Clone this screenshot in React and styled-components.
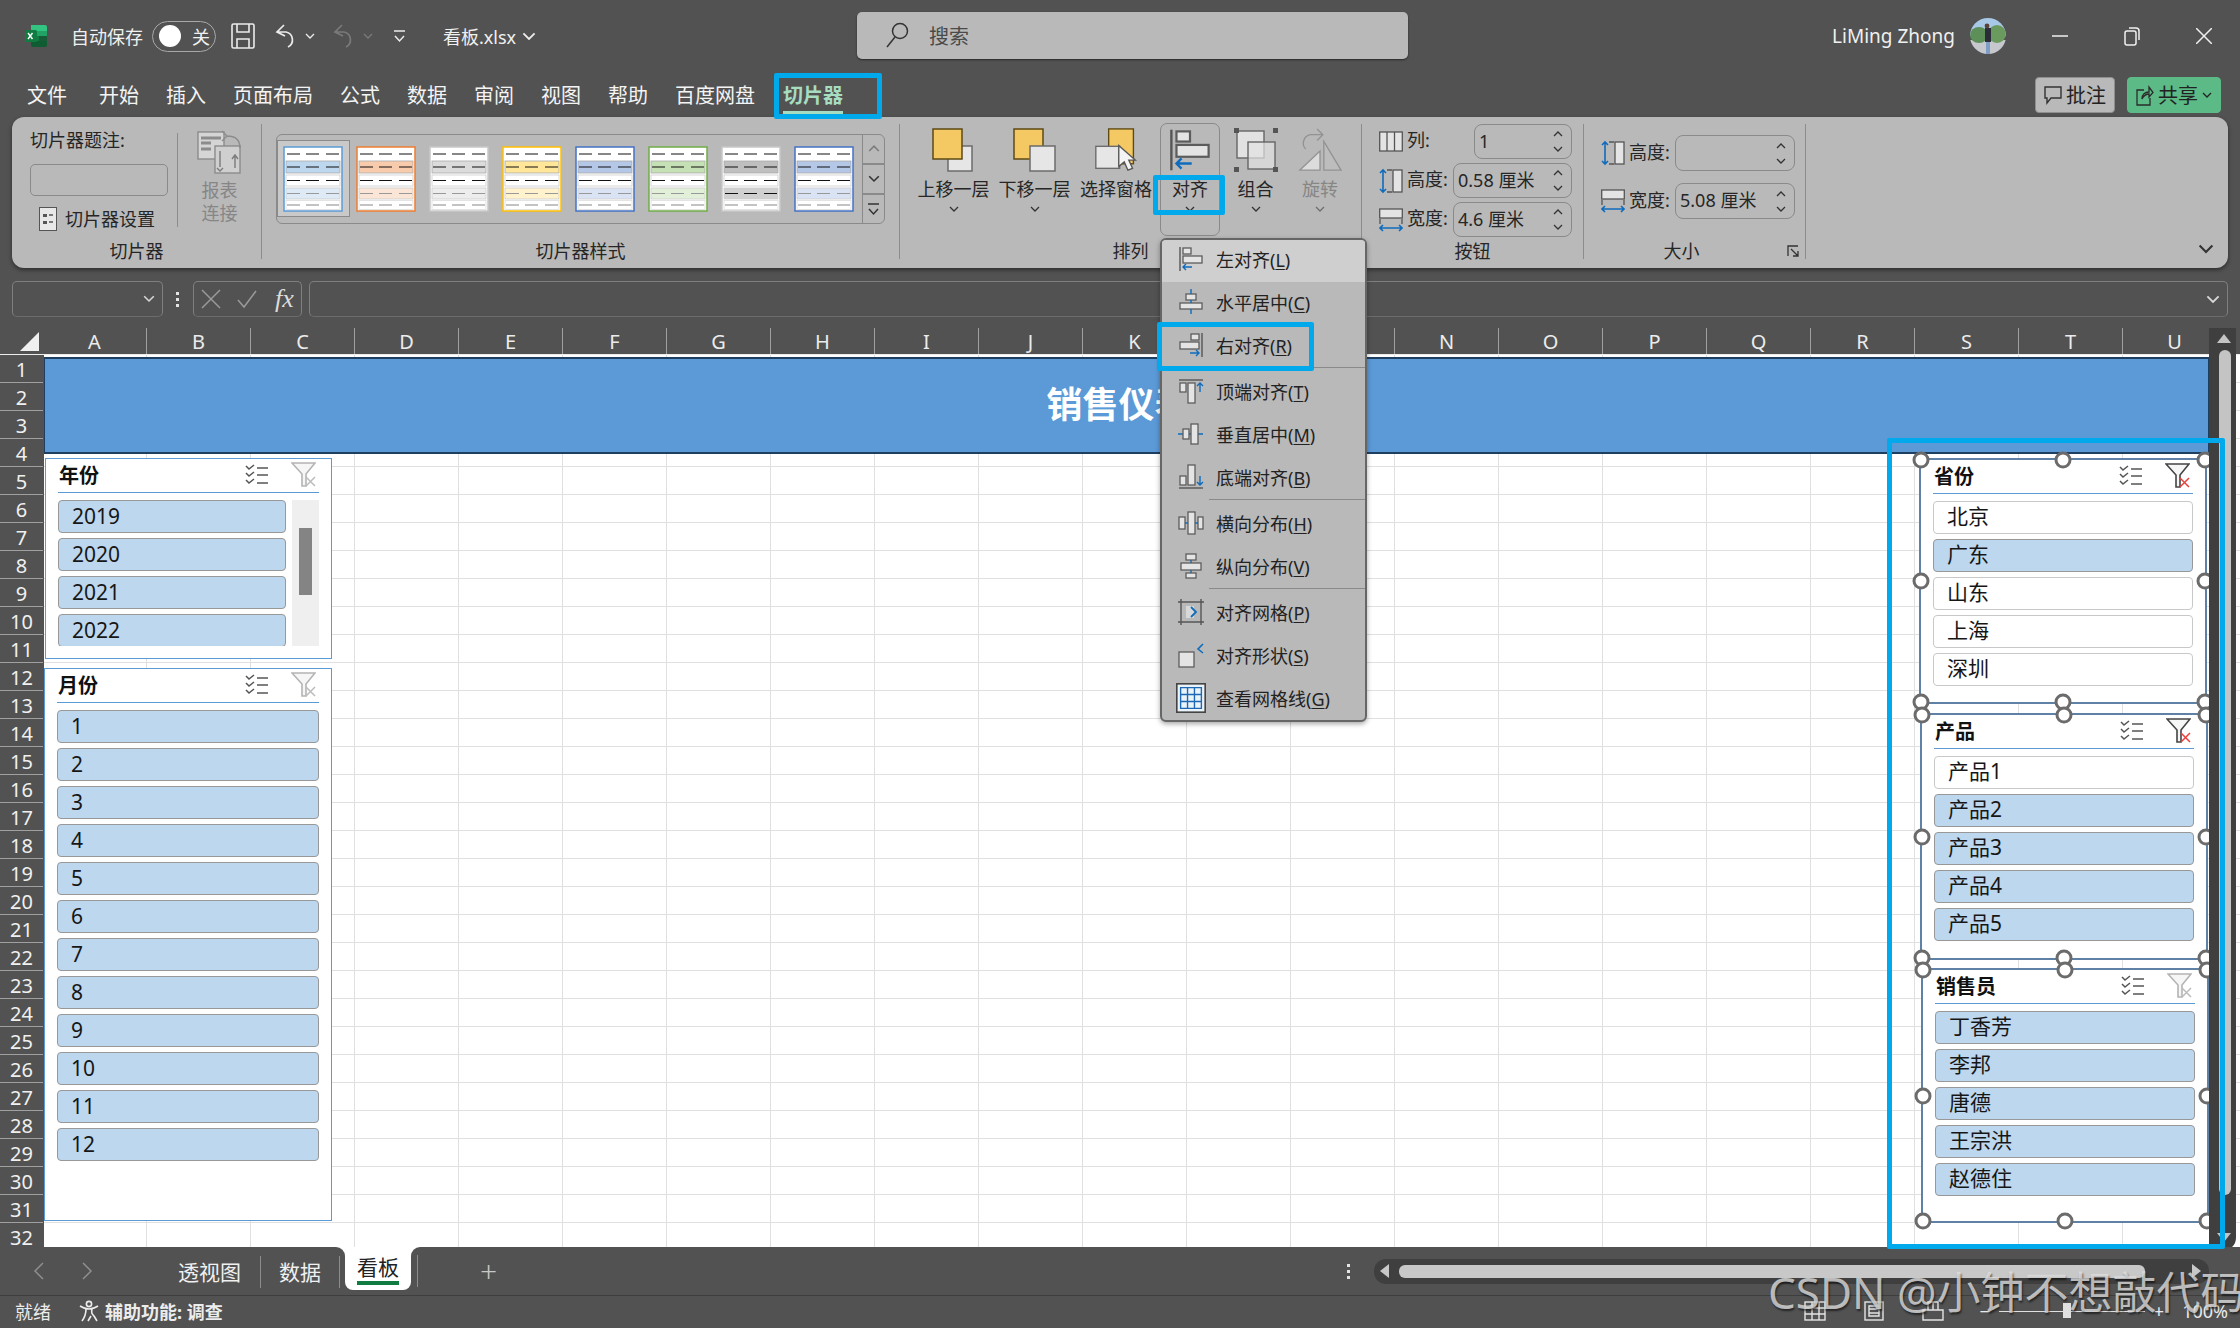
import React from 'react';
import styled, { createGlobalStyle } from 'styled-components';

const UI_FONT = '"Noto Sans", "Noto Sans CJK SC", sans-serif';
const DARK = '#525252';
const RIBBON = '#b9b9b9';
const CYAN = '#00a9ec';
const BLUE = '#0f6cbd';

const GlobalStyle = createGlobalStyle`
  html, body { margin: 0; padding: 0; background: ${DARK}; }
  * { box-sizing: border-box; }
`;

const Page = styled.div`
  position: relative;
  width: 2240px;
  height: 1328px;
  overflow: hidden;
  display: flex;
  flex-direction: column;
  background: ${DARK};
  color: #f0f0f0;
  font-family: ${UI_FONT};
`;

/* title bar */
const TitleBar = styled.div`
  height: 72px;
  flex: none;
  display: flex;
  align-items: center;
`;
const TitleLeft = styled.div`
  flex: 0 0 857px;
  display: flex;
  align-items: center;
  padding-left: 24px;
  font-size: 18px;
`;
const Spaced = styled.div`
  display: flex;
  align-items: center;
  margin-left: ${p => p.$ml || 0}px;
  white-space: nowrap;
`;
const Toggle = styled.div`
  width: 64px;
  height: 31px;
  margin-left: 9px;
  border: 1px solid #a8a8a8;
  border-radius: 16px;
  display: flex;
  align-items: center;
  padding-left: 6px;
  &::before {
    content: '';
    width: 22px;
    height: 22px;
    border-radius: 50%;
    background: #fff;
    margin-right: 11px;
  }
`;
const SearchBox = styled.div`
  flex: 0 0 551px;
  height: 47px;
  margin-top: -2px;
  background: ${RIBBON};
  border-radius: 5px;
  box-shadow: 0 1px 2px rgba(0, 0, 0, 0.5);
  color: #4a4a4a;
  font-size: 20px;
  display: flex;
  align-items: center;
  gap: 20px;
  padding-left: 28px;
`;
const TitleRight = styled.div`
  flex: 1;
  display: flex;
  align-items: center;
  justify-content: flex-end;
  padding-right: 28px;
  font-size: 19px;
`;

/* ribbon tabs */
const TabRow = styled.div`
  height: 45px;
  flex: none;
  display: flex;
  align-items: center;
  padding: 0 19px 0 27px;
  font-size: 20px;
`;
const RibbonTab = styled.div`
  position: relative;
  margin-right: ${p => p.$mr || 27}px;
  white-space: nowrap;
  color: ${p => (p.$active ? '#a6dcc0' : '#f4f4f4')};
  font-weight: ${p => (p.$active ? 700 : 400)};
  &::after {
    content: '';
    display: ${p => (p.$active ? 'block' : 'none')};
    position: absolute;
    left: 0;
    right: 0;
    bottom: -5px;
    height: 3px;
    background: #a6dcc0;
  }
`;
const TabActions = styled.div`
  margin-left: auto;
  display: flex;
  gap: 12px;
`;
const CommentButton = styled.div`
  width: 80px;
  height: 36px;
  background: ${RIBBON};
  border: 1px solid #8f8f8f;
  border-radius: 4px;
  color: #222;
  font-size: 20px;
  display: flex;
  align-items: center;
  justify-content: center;
  gap: 4px;
`;
const ShareButton = styled(CommentButton)`
  width: 94px;
  background: #5bba85;
  border-color: #5bba85;
`;

/* ribbon */
const Ribbon = styled.div`
  flex: none;
  margin: 0 12px;
  width: 2216px;
  height: 151px;
  background: ${RIBBON};
  border-radius: 12px;
  box-shadow: 0 2px 4px rgba(0, 0, 0, 0.45);
  display: flex;
  color: #262626;
  font-size: 18px;
  line-height: 24px;
`;
const Group = styled.div`
  flex: 0 0 ${p => p.$w}px;
  height: 135px;
  margin-top: 7px;
  border-right: 1px solid #8c8c8c;
  display: flex;
  flex-direction: column;
`;
const GroupBody = styled.div`
  flex: 0 0 115px;
  min-height: 0;
  display: flex;
`;
const GroupLabel = styled.div`
  position: relative;
  flex: 0 0 24px;
  line-height: 24px;
  text-align: center;
  padding-right: ${p => p.$pr || 0}px;
  white-space: nowrap;
`;
const CaptionColumn = styled.div`
  flex: 0 0 166px;
  padding-left: 18px;
  border-right: 1px solid #8c8c8c;
  margin: 9px 0 12px;
  display: flex;
  flex-direction: column;
`;
const CaptionTitle = styled.div`
  height: 14px;
  line-height: 14px;
  white-space: nowrap;
`;
const CaptionInput = styled.div`
  flex: none;
  width: 138px;
  height: 32px;
  margin-top: 17px;
  border: 1px solid #8a8a8a;
  border-radius: 5px;
`;
const SettingsRow = styled.div`
  display: flex;
  align-items: center;
  gap: 8px;
  margin: 11px 0 0 9px;
  white-space: nowrap;
`;
const ReportButton = styled.div`
  flex: 1;
  display: flex;
  flex-direction: column;
  align-items: center;
  padding-top: 4px;
  color: #868686;
  line-height: 23px;
  text-align: center;
  & > svg {
    margin-bottom: 5px;
  }
`;
const Gallery = styled.div`
  width: 609px;
  height: 90px;
  margin: 10px 0 0 14px;
  border: 1px solid #8a8a8a;
  border-radius: 6px;
  display: flex;
  align-items: flex-start;
`;
const SwatchCell = styled.div`
  flex: 0 0 73px;
  height: 77px;
  margin-top: 5px;
  padding: 5px;
  border: 1px solid ${p => (p.$selected ? '#8a8a8a' : 'transparent')};
  background: ${p => (p.$selected ? '#c9c9c9' : 'transparent')};
`;
const GalleryScroll = styled.div`
  margin-left: auto;
  flex: 0 0 22px;
  height: 88px;
  border-left: 1px solid #8a8a8a;
  display: flex;
  flex-direction: column;
`;
const ScrollStep = styled.div`
  flex: 1;
  display: flex;
  align-items: center;
  justify-content: center;
  border-top: ${p => (p.$line ? '2px solid #8a8a8a' : 'none')};
  opacity: ${p => (p.$off ? 0.45 : 1)};
`;
const ArrangeRow = styled.div`
  display: flex;
  padding-left: 13px;
`;
const BigButton = styled.div`
  position: relative;
  flex: 0 0 ${p => p.$w}px;
  height: 113px;
  margin-top: -1px;
  display: flex;
  flex-direction: column;
  align-items: center;
  padding-top: 5px;
  white-space: nowrap;
  color: ${p => (p.$off ? '#868686' : '#262626')};
  &::before {
    content: '';
    display: ${p => (p.$open ? 'block' : 'none')};
    position: absolute;
    left: 3px;
    right: 3px;
    top: 0;
    bottom: 0;
    border: 1px solid #8a8a8a;
    border-radius: 7px;
  }
`;
const BigLabel = styled.div`
  height: 24px;
  margin-top: 5px;
  line-height: 24px;
`;
const BigCaret = styled.div`
  margin-top: 5px;
  display: flex;
  opacity: ${p => (p.$off ? 0.55 : 1)};
`;
const FieldStack = styled.div`
  width: 100%;
  display: flex;
  flex-direction: column;
  gap: ${p => p.$gap}px;
  padding: ${p => p.$pad};
`;
const FieldRow = styled.div`
  display: flex;
  align-items: center;
  gap: 4px;
`;
const FieldText = styled.span`
  margin-top: -3px;
`;
const SpinInput = styled.div`
  margin-left: auto;
  width: ${p => p.$w}px;
  height: ${p => p.$h || 36}px;
  border: 1px solid #8a8a8a;
  border-radius: 8px;
  display: flex;
  align-items: center;
  justify-content: space-between;
  padding: 0 8px 2px 4px;
  white-space: nowrap;
`;
const SpinArrows = styled.div`
  display: flex;
  flex-direction: column;
  gap: 9px;
  padding-top: 2px;
`;
const Launcher = styled.svg`
  position: absolute;
  right: 6px;
  top: 6px;
`;
const CollapseCaret = styled.div`
  margin: auto 14px 14px auto;
  display: flex;
`;

/* formula bar */
const FormulaBar = styled.div`
  flex: none;
  height: 36px;
  margin: 13px 12px 11px;
  display: flex;
  align-items: stretch;
`;
const FormulaBox = styled.div`
  flex: ${p => (p.$w ? `0 0 ${p.$w}px` : 1)};
  margin-left: ${p => p.$ml || 0}px;
  border: 1px solid #7f7f7f;
  border-bottom-color: #6c6c6c;
  border-radius: 5px;
  display: flex;
  align-items: center;
  justify-content: ${p => p.$justify || 'flex-end'};
  padding: 0 7px;
  color: #b5b5b5;
`;
const FxText = styled.span`
  font-family: "Liberation Serif", serif;
  font-style: italic;
  font-size: 26px;
  color: #dcdcdc;
  margin-left: 12px;
`;
const VDots = styled.div`
  display: flex;
  flex-direction: column;
  gap: 3px;
  justify-content: center;
  margin-left: ${p => p.$ml}px;
  & > i {
    width: 3px;
    height: 3px;
    background: #e4e4e4;
    display: block;
  }
`;

/* grid */
const GridArea = styled.div`
  position: relative;
  flex: none;
  height: 919px;
  display: flex;
  flex-direction: column;
`;
const ColumnHeaders = styled.div`
  flex: 0 0 26px;
  display: flex;
  overflow: hidden;
`;
const Corner = styled.div`
  flex: 0 0 43px;
  position: relative;
  &::after {
    content: '';
    position: absolute;
    right: 4px;
    bottom: 3px;
    border-style: solid;
    border-width: 0 0 19px 19px;
    border-color: transparent transparent #f0f0f0 transparent;
  }
`;
const ColumnCell = styled.div`
  flex: 0 0 104px;
  font-size: 20px;
  line-height: 28px;
  text-align: center;
  border-right: 1px solid #a0a0a0;
  color: #ececec;
`;
const GridBody = styled.div`
  flex: 1;
  display: flex;
  border-top: 1px solid #ececec;
  overflow: hidden;
`;
const RowHeaders = styled.div`
  flex: 0 0 43px;
  display: flex;
  flex-direction: column;
`;
const RowCell = styled.div`
  flex: 0 0 28px;
  min-height: 0;
  overflow: hidden;
  padding-top: 1px;
  font-size: 20px;
  line-height: 27px;
  text-align: center;
  border-bottom: 1px solid #a0a0a0;
  color: #f0f0f0;
`;
const Sheet = styled.div`
  position: relative;
  flex: 1;
  margin-left: 1px;
  background-color: #fff;
  background-image:
    linear-gradient(#e0e0e0 1px, transparent 1px),
    linear-gradient(90deg, #e0e0e0 1px, transparent 1px);
  background-size: 104px 28px;
  background-position: 102px 27px;
`;
const Banner = styled.div`
  position: absolute;
  left: 0;
  top: 2px;
  width: 2166px;
  height: 97px;
  background: #5b9ad6;
  border: 2px solid #1f3f60;
  border-left-width: 1px;
  display: flex;
  align-items: center;
  justify-content: center;
  padding: 0 0 6px 20px;
  color: #fff;
  font-size: 36px;
  font-weight: 700;
`;

const SlicerBox = styled.div`
  position: absolute;
  left: ${p => p.$x - 44}px;
  top: ${p => p.$y - 355}px;
  width: ${p => p.$w}px;
  height: ${p => p.$h}px;
  background: #fff;
  border: ${p => (p.$selected ? '2px solid #5f81a6' : '1.5px solid #5b9bd5')};
  padding: 0 12px;
  color: #111;
`;
const SlicerHead = styled.div`
  height: 34px;
  display: flex;
  align-items: center;
  border-bottom: 1.5px solid #5b9bd5;
  font-size: 20px;
  font-weight: 700;
  padding: 0 0 2px 1px;
`;
const HeadIcons = styled.div`
  margin-left: auto;
  display: flex;
  align-items: center;
  gap: 22px;
  padding-right: 3px;
`;
const SlicerBody = styled.div`
  display: flex;
  margin-top: 7px;
  justify-content: space-between;
`;
const ItemList = styled.div`
  flex: ${p => (p.$w ? `0 0 ${p.$w}px` : 1)};
  height: ${p => (p.$h ? `${p.$h}px` : 'auto')};
  overflow: hidden;
  display: flex;
  flex-direction: column;
  gap: 5px;
`;
const SlicerItem = styled.div`
  flex: 0 0 33px;
  background: ${p => (p.$on ? '#bdd7ee' : '#fff')};
  border: 1px solid ${p => (p.$on ? '#989898' : '#c8c8c8')};
  border-radius: 4px;
  font-size: 21px;
  line-height: ${p => (p.$digits ? 31 : 29)}px;
  padding-left: 13px;
  color: #161616;
`;
const SlicerScroll = styled.div`
  flex: 0 0 27px;
  height: 146px;
  background: #efefef;
  padding: 28px 7px 0;
  &::before {
    content: '';
    display: block;
    height: 67px;
    background: #848484;
  }
`;
const Handle = styled.span`
  position: absolute;
  left: ${p => p.$x}%;
  top: ${p => p.$y}%;
  width: 17px;
  height: 17px;
  transform: translate(-50%, -50%);
  background: #fff;
  border: 3px solid #6b6b6b;
  border-radius: 50%;
`;

const VScroll = styled.div`
  position: absolute;
  left: 2209px;
  top: 0;
  width: 27px;
  height: 922px;
  background: #3f3f3f;
  border-radius: 0 0 12px 0;
  &::before {
    content: '';
    position: absolute;
    left: 8px;
    top: 6px;
    border-style: solid;
    border-width: 0 7px 9px;
    border-color: transparent transparent #c4c4c4;
  }
  &::after {
    content: '';
    position: absolute;
    left: 8px;
    bottom: 8px;
    border-style: solid;
    border-width: 9px 7px 0;
    border-color: #c4c4c4 transparent transparent;
  }
`;
const VThumb = styled.div`
  position: absolute;
  left: 10px;
  right: 5px;
  top: 22px;
  bottom: 55px;
  border-radius: 6px;
  background: #c4c4c4;
`;

/* sheet tabs */
const TabsBar = styled.div`
  flex: none;
  height: 48px;
  display: flex;
  background: linear-gradient(#fff 50%, ${DARK} 50%);
`;
const TabsLeft = styled.div`
  flex: 0 0 345px;
  background: ${DARK};
  border-radius: 0 9px 0 0;
  display: flex;
  align-items: center;
  font-size: 21px;
  color: #f0f0f0;
`;
const NavArrows = styled.div`
  display: flex;
  gap: 36px;
  margin: 0 66px 0 33px;
`;
const SheetTab = styled.div`
  padding: 0 ${p => p.$pad}px;
  height: 32px;
  line-height: 32px;
  border-right: 1px solid #8c8c8c;
  margin-top: 2px;
  white-space: nowrap;
`;
const ActiveTab = styled.div`
  position: relative;
  flex: 0 0 66px;
  height: 43px;
  background: #fff;
  border-radius: 0 0 8px 8px;
  color: #222;
  font-size: 21px;
  line-height: 40px;
  text-align: center;
  &::after {
    content: '';
    position: absolute;
    left: 12px;
    right: 12px;
    bottom: 5px;
    height: 4px;
    background: #107c41;
  }
`;
const TabsRight = styled.div`
  flex: 1;
  background: ${DARK};
  border-radius: 9px 0 0 0;
  display: flex;
  align-items: center;
  padding-left: 6px;
  position: relative;
`;
const TabDivider = styled.div`
  width: 1px;
  height: 32px;
  background: #8c8c8c;
`;
const PlusSign = styled.div`
  margin-left: 62px;
  font-size: 30px;
  font-weight: 300;
  line-height: 1;
  color: #c8c8c8;
`;
const HScroll = styled.div`
  position: relative;
  margin-left: 24px;
  width: 835px;
  height: 25px;
  border-radius: 12px;
  background: #3f3f3f;
  &::before {
    content: '';
    position: absolute;
    left: 6px;
    top: 5px;
    border-style: solid;
    border-width: 7px 9px 7px 0;
    border-color: transparent #c8c8c8 transparent transparent;
  }
  &::after {
    content: '';
    position: absolute;
    right: 8px;
    top: 5px;
    border-style: solid;
    border-width: 7px 0 7px 9px;
    border-color: transparent transparent transparent #c8c8c8;
  }
`;
const HThumb = styled.div`
  position: absolute;
  left: 25px;
  top: 6px;
  width: 746px;
  height: 13px;
  border-radius: 6px;
  background: #c8c8c8;
`;

/* status bar */
const StatusBar = styled.div`
  flex: none;
  height: 33px;
  border-top: 1px solid #3e3e3e;
  display: flex;
  align-items: center;
  padding: 0 0 2px 15px;
  font-size: 18px;
  color: #ececec;
`;
const StatusBold = styled.div`
  display: flex;
  align-items: center;
  gap: 6px;
  margin-left: 28px;
  font-weight: 700;
`;
const StatusRight = styled.div`
  margin-left: auto;
  display: flex;
  align-items: center;
  padding-right: 12px;
`;
const ViewGlyphs = styled.div`
  display: flex;
  gap: 38px;
  margin-right: 36px;
`;
const ZoomSlider = styled.div`
  position: relative;
  width: 146px;
  height: 1px;
  margin: 0 9px;
  background: #e0e0e0;
  &::after {
    content: '';
    position: absolute;
    left: 64px;
    top: -8px;
    width: 8px;
    height: 15px;
    background: #e0e0e0;
  }
`;
const ZoomValue = styled.div`
  margin-left: 18px;
  font-size: 18px;
`;

/* open menu */
const Menu = styled.div`
  position: absolute;
  left: 1160px;
  top: 238px;
  width: 207px;
  height: 484px;
  z-index: 5;
  background: ${RIBBON};
  border: 2px solid #666;
  border-radius: 6px;
  box-shadow: 0 2px 5px rgba(0, 0, 0, 0.35);
  color: #222;
  font-size: 18px;
  overflow: hidden;
`;
const MenuList = styled.div`
  margin-top: -3px;
`;
const MenuItem = styled.div`
  height: 43px;
  display: flex;
  align-items: center;
  padding-left: ${p => (p.$pressed ? 14 : 16)}px;
  gap: ${p => (p.$pressed ? 10 : 12)}px;
  background: ${p => (p.$hover ? '#cfcfcf' : 'transparent')};
  box-shadow: ${p => (p.$hover ? '0 2px 0 #cfcfcf' : 'none')};
  white-space: nowrap;
`;
const MenuSep = styled.div`
  height: 1px;
  margin: 1px 0 1px 47px;
  background: #8a8a8a;
`;
const AccessKey = styled.span`
  text-decoration: underline;
  text-underline-offset: 2px;
`;
const Callout = styled.div`
  position: absolute;
  left: ${p => p.$x}px;
  top: ${p => p.$y}px;
  width: ${p => p.$w}px;
  height: ${p => p.$h}px;
  z-index: 6;
  border: 5px solid ${CYAN};
  border-radius: 2px;
  pointer-events: none;
`;
const Watermark = styled.div`
  position: absolute;
  left: 1768px;
  top: 1262px;
  z-index: 7;
  font-size: 44px;
  line-height: 60px;
  white-space: nowrap;
  color: rgba(225, 225, 225, 0.78);
  text-shadow: 1px 2px 2px rgba(0, 0, 0, 0.55);
  pointer-events: none;
`;

/* drawings */
const Caret = ({ up, size = 10, color = '#333' }) => (
  <svg width={size} height={size * 0.6} viewBox="0 0 10 6" fill="none">
    <path d={up ? 'M1 5l4-4 4 4' : 'M1 1l4 4 4-4'} stroke={color} strokeWidth="1.3" />
  </svg>
);

const ExcelLogo = () => (
  <svg width="24" height="24" viewBox="0 0 24 24">
    <path d="M7 1h14a2 2 0 0 1 2 2v4H7z" fill="#33c481" />
    <path d="M15 7h8v5h-8z" fill="#21a366" />
    <path d="M7 7h8v5H7z" fill="#21a366" />
    <path d="M7 12h8v5H7z" fill="#107c41" />
    <path d="M15 12h8v5h-8z" fill="#185c37" />
    <path d="M7 17h16v4a2 2 0 0 1-2 2H9a2 2 0 0 1-2-2z" fill="#0f5c33" />
    <rect x="1" y="6" width="12" height="12" rx="1.5" fill="#107c41" />
    <path d="M4 9l4.5 6M8.5 9L4 15" stroke="#fff" strokeWidth="1.4" />
  </svg>
);
const SaveGlyph = () => (
  <svg width="24" height="26" viewBox="0 0 24 26" fill="none" stroke="#ececec" strokeWidth="1.6">
    <rect x="1" y="1" width="22" height="24" rx="1.5" />
    <path d="M6 1v8h12V1M6 25v-9h12v9" />
  </svg>
);
const UndoGlyph = ({ color = '#ececec' }) => (
  <svg width="24" height="24" viewBox="0 0 24 24" fill="none" stroke={color} strokeWidth="1.7">
    <path d="M9 1L2 8l8 4M3 8h8a8 8 0 0 1 2 15" />
  </svg>
);
const CustomizeGlyph = ({ color = '#ececec' }) => (
  <svg width="13" height="14" viewBox="0 0 13 14" fill="none" stroke={color} strokeWidth="1.5">
    <path d="M1 2h11M2 7l4.5 5L11 7" />
  </svg>
);
const SearchGlyph = () => (
  <svg width="24" height="26" viewBox="0 0 24 26" fill="none" stroke="#333" strokeWidth="1.5">
    <circle cx="15" cy="9" r="7.5" />
    <path d="M10 15L2 25" />
  </svg>
);
const Avatar = () => (
  <svg width="36" height="36" viewBox="0 0 36 36">
    <defs>
      <clipPath id="avatar-clip"><circle cx="18" cy="18" r="18" /></clipPath>
    </defs>
    <g clipPath="url(#avatar-clip)">
      <rect width="36" height="18" fill="#a7c8e6" />
      <rect y="22" width="36" height="14" fill="#c6c8cd" />
      <ellipse cx="9" cy="17" rx="9" ry="8" fill="#5d8f58" />
      <ellipse cx="27" cy="16" rx="9" ry="9" fill="#6b9a5e" />
      <rect x="15" y="10" width="6" height="14" fill="#2a2c3a" />
      <rect x="16" y="24" width="4" height="12" fill="#7d9cc6" />
      <circle cx="17" cy="8" r="2.4" fill="#5b4034" />
    </g>
  </svg>
);
const WinMin = () => (
  <svg width="16" height="16" viewBox="0 0 16 16"><path d="M0 8h16" stroke="#f0f0f0" strokeWidth="1.5" /></svg>
);
const WinRestore = () => (
  <svg width="16" height="20" viewBox="0 0 16 20" fill="none" stroke="#f0f0f0" strokeWidth="1.5">
    <rect x="1" y="5" width="11" height="14" rx="2" />
    <path d="M5 2h7a3 3 0 0 1 3 3v9" />
  </svg>
);
const WinClose = () => (
  <svg width="16" height="16" viewBox="0 0 16 16"><path d="M0 0l16 16M16 0L0 16" stroke="#f0f0f0" strokeWidth="1.5" /></svg>
);
const CommentGlyph = () => (
  <svg width="18" height="20" viewBox="0 0 18 20" fill="none" stroke="#333" strokeWidth="1.4">
    <path d="M1 2h16v11H7l-4 5v-5H1z" />
  </svg>
);
const ShareGlyph = () => (
  <svg width="18" height="22" viewBox="0 0 18 22" fill="none" stroke="#2b2b2b" strokeWidth="1.3">
    <path d="M8 6H1v15h13v-7M6 15c0-5 3-7 7-7V3l4 5.5L13 13v-3c-3 0-5 1-7 5z" />
  </svg>
);
const SettingsGlyph = () => (
  <svg width="18" height="24" viewBox="0 0 18 24">
    <rect x=".5" y=".5" width="17" height="23" fill="#e8e8e8" stroke="#555" />
    <path d="M4 7h4v3H4zM4 14h4v3H4z" fill="#555" />
    <path d="M10 8h4M10 15h4" stroke="#555" strokeWidth="1.5" />
  </svg>
);
const ReportGlyph = () => (
  <svg width="46" height="46" viewBox="0 0 46 46" fill="none" stroke="#8c8c8c" strokeWidth="1.4">
    <rect x="1" y="4" width="26" height="27" fill="#d5d5d5" />
    <path d="M4 10h20M4 15h10M4 21h10" strokeWidth="3" />
    <rect x="18" y="18" width="25" height="27" fill="#cfcfcf" />
    <path d="M23 23v16M38 28v12M35 31l3-4 3 4M26 40l-3 3-3-3" stroke="#7b7b7b" />
    <path d="M30 8l-5-5M30 8l-5 5M30 8c8 0 13 4 13 12" />
  </svg>
);

const SWATCHES = [
  { edge: '#5b9bd5', on: '#bdd7ee', dim: '#deebf7' },
  { edge: '#ed7d31', on: '#f8cbad', dim: '#fbe5d6' },
  { edge: '#c8c8c8', on: '#dbdbdb', dim: '#ededed' },
  { edge: '#ffc000', on: '#ffe699', dim: '#fff2cc' },
  { edge: '#4472c4', on: '#b4c7e7', dim: '#dae3f3' },
  { edge: '#70ad47', on: '#c5e0b4', dim: '#e2f0d9' },
  { edge: '#c8c8c8', on: '#bfbfbf', dim: '#d0d0d0', darkDim: true },
  { edge: '#4472c4', on: '#b4c7e7', dim: '#dae3f3' },
];

const DashLine = ({ y, color }) => (
  <g stroke={color} strokeWidth="1.2">
    <path d={`M4 ${y}h13M23 ${y}h13M43 ${y}h13`} />
  </g>
);
const SlicerSwatch = ({ edge, on, dim, darkDim }) => (
  <svg width="60" height="66" viewBox="0 0 60 66">
    <rect x="1" y="1" width="58" height="64" fill="#fff" stroke={edge} strokeWidth="1.5" />
    <rect x="3" y="15" width="54" height="12" fill={on} stroke="#aaa" strokeWidth=".8" />
    <rect x="3" y="29" width="54" height="11" fill="#fff" stroke="#ccc" strokeWidth=".8" />
    <rect x="3" y="42" width="54" height="11" fill={dim} stroke="#ccc" strokeWidth=".8" />
    <rect x="3" y="54.5" width="54" height="9" fill="#fff" stroke="#ddd" strokeWidth=".8" />
    <DashLine y={8} color="#111" />
    <DashLine y={21} color="#111" />
    <DashLine y={34.5} color="#111" />
    <DashLine y={47.5} color={darkDim ? '#111' : '#999'} />
    <DashLine y={59} color="#888" />
  </svg>
);

const LAYER_EDGE = '#5e4a14';
const LayerUp = () => (
  <svg width="44" height="44" viewBox="0 0 44 44">
    <rect x="16" y="18" width="24" height="25" fill="#e6e6e6" stroke="#6b6b6b" strokeWidth="1.5" />
    <rect x="1" y="1" width="29" height="30" fill="#f4c862" stroke={LAYER_EDGE} strokeWidth="1.5" />
  </svg>
);
const LayerDown = () => (
  <svg width="44" height="44" viewBox="0 0 44 44">
    <rect x="1" y="1" width="29" height="30" fill="#f4c862" stroke={LAYER_EDGE} strokeWidth="1.5" />
    <rect x="17" y="18" width="25" height="25" fill="#e6e6e6" stroke="#6b6b6b" strokeWidth="1.5" />
  </svg>
);
const LayerPane = () => (
  <svg width="46" height="44" viewBox="0 0 46 48">
    <rect x="15" y="1" width="27" height="38" fill="#f4c862" stroke={LAYER_EDGE} strokeWidth="1.5" />
    <rect x="1" y="20" width="26" height="24" fill="#e6e6e6" stroke="#6b6b6b" strokeWidth="1.5" />
    <path d="M26 19v23l6-5 4 9 5-2-4-9h7z" fill="#f4f4f4" stroke="#555" strokeWidth="1.5" />
  </svg>
);
const GroupGlyph = () => (
  <svg width="44" height="44" viewBox="0 0 44 44" fill="none">
    <rect x="3" y="3" width="27" height="27" fill="#e2e2e2" stroke="#666" strokeWidth="1.4" />
    <rect x="14" y="14" width="27" height="27" fill="rgba(226,226,226,.7)" stroke="#666" strokeWidth="1.4" />
    <path d="M0 0h5v5H0zM39 0h5v5h-5zM0 39h5v5H0zM39 39h5v5h-5z" fill="#555" />
  </svg>
);
const RotateGlyph = () => (
  <svg width="46" height="44" viewBox="0 0 46 46" fill="none" stroke="#939393" strokeWidth="1.4">
    <path d="M2 44l21-20v20z" fill="#dcdcdc" />
    <path d="M27 14v30h18z" fill="#bdbdbd" />
    <path d="M20 1l6 6-6 6M26 7H13a9 9 0 0 0-5 15" />
  </svg>
);

const FieldGlyph = ({ kind }) => (
  <svg width="24" height="26" viewBox="0 0 24 26" fill="none" strokeWidth="1.3">
    {kind === 'columns' && (
      <g stroke="#555" fill="#e4e4e4">
        <rect x=".7" y="3" width="22.6" height="19" />
        <path d="M8 3v19M15.5 3v19" />
      </g>
    )}
    {kind === 'height' && (
      <g>
        <rect x="14" y="2" width="9" height="22" fill="#e4e4e4" stroke="#555" />
        <path d="M8 2h5M8 24h5" stroke="#555" />
        <path d="M4 2v22M1 5l3-3 3 3M1 21l3 3 3-3" stroke={BLUE} strokeWidth="1.6" />
      </g>
    )}
    {kind === 'width' && (
      <g>
        <rect x=".7" y="2" width="22.6" height="9" fill="#e4e4e4" stroke="#555" />
        <path d="M1 12v5M23 12v5" stroke="#555" />
        <path d="M1 21h22M4 18l-3 3 3 3M20 18l3 3-3 3" stroke={BLUE} strokeWidth="1.6" />
      </g>
    )}
  </svg>
);

const MENU_RECT = { fill: '#e4e4e4', stroke: '#5c5c5c', strokeWidth: 1.3 };
const AlignGlyph = ({ kind, size = 26 }) => (
  <svg width={size} height={size} viewBox="0 0 26 26" fill="none" strokeWidth="1.4">
    {kind === 'left' && (
      <g>
        <path d="M2 1v24" stroke="#555" />
        <rect x="5" y="2" width="8" height="6" {...MENU_RECT} />
        <rect x="5" y="10" width="19" height="7" {...MENU_RECT} />
        <path d="M14 21H5m3-3l-3 3 3 3" stroke={BLUE} />
      </g>
    )}
    {kind === 'hcenter' && (
      <g>
        <rect x="8" y="5" width="10" height="6" {...MENU_RECT} />
        <rect x="2" y="14" width="22" height="6" {...MENU_RECT} />
        <path d="M13 0v5M13 11v3M13 20v5" stroke={BLUE} />
      </g>
    )}
    {kind === 'right' && (
      <g>
        <path d="M24 1v24" stroke="#555" />
        <rect x="13" y="2" width="8" height="6" {...MENU_RECT} />
        <rect x="2" y="10" width="19" height="7" {...MENU_RECT} />
        <path d="M12 21h9m-3-3l3 3-3 3" stroke={BLUE} />
      </g>
    )}
    {kind === 'top' && (
      <g>
        <path d="M1 2h24" stroke="#555" />
        <rect x="2" y="5" width="6" height="9" {...MENU_RECT} />
        <rect x="10" y="5" width="7" height="20" {...MENU_RECT} />
        <path d="M22 14V5m-3 3l3-3 3 3" stroke={BLUE} />
      </g>
    )}
    {kind === 'vcenter' && (
      <g>
        <path d="M0 13h5M11 13h2M20 13h5" stroke={BLUE} />
        <rect x="5" y="8" width="6" height="10" {...MENU_RECT} />
        <rect x="13" y="3" width="7" height="20" {...MENU_RECT} />
      </g>
    )}
    {kind === 'bottom' && (
      <g>
        <path d="M1 24h24" stroke="#555" />
        <rect x="2" y="12" width="6" height="9" {...MENU_RECT} />
        <rect x="10" y="1" width="7" height="20" {...MENU_RECT} />
        <path d="M22 12v9m-3-3l3 3 3-3" stroke={BLUE} />
      </g>
    )}
    {kind === 'distH' && (
      <g>
        <path d="M7 13h3M17 13h3" stroke={BLUE} />
        <rect x="1" y="7" width="6" height="12" {...MENU_RECT} />
        <rect x="10" y="2" width="7" height="22" {...MENU_RECT} />
        <rect x="20" y="7" width="5" height="12" {...MENU_RECT} />
      </g>
    )}
    {kind === 'distV' && (
      <g>
        <path d="M13 7v3M13 17v3" stroke={BLUE} />
        <rect x="8" y="1" width="10" height="6" {...MENU_RECT} />
        <rect x="3" y="10" width="20" height="7" {...MENU_RECT} />
        <rect x="8" y="20" width="10" height="5" {...MENU_RECT} />
      </g>
    )}
    {kind === 'snapGrid' && (
      <g>
        <rect x="8" y="7" width="8" height="12" fill="#d8d8d8" />
        <path d="M3 0v26M23 0v26M0 3h26M0 23h26" stroke="#555" />
        <path d="M13 8l5 5-5 5" stroke={BLUE} strokeWidth="1.8" />
      </g>
    )}
    {kind === 'snapShape' && (
      <g>
        <rect x="1" y="10" width="15" height="15" {...MENU_RECT} />
        <path d="M25 2l-5 5 5 4" stroke={BLUE} strokeWidth="1.6" />
      </g>
    )}
    {kind === 'gridlines' && (
      <g>
        <rect x=".7" y=".7" width="24.6" height="24.6" fill="#eaf2fa" stroke="#444" strokeWidth="1.4" />
        <path d="M4 4h18v18H4zM4 10h18M4 16h18M10 4v18M16 4v18" stroke="#1d68b4" strokeWidth="1.2" />
      </g>
    )}
  </svg>
);

const MultiSelectGlyph = () => (
  <svg width="24" height="22" viewBox="0 0 24 22" fill="none" stroke="#555" strokeWidth="1.5">
    <path d="M1 2l3 3 5-4M1 9l3 3 5-4M1 16l3 3 5-4M12 4h11M12 11h11M12 19h11" />
  </svg>
);
const ClearFilterGlyph = ({ active }) => (
  <svg width="25" height="25" viewBox="0 0 25 25" fill="none">
    <path d="M1 1h23l-9 11v12h-4V12z" fill="#f6f6f6" stroke={active ? '#444' : '#b4b4b4'} strokeWidth="1.6" />
    <path d="M15 15l9 9M24 15l-9 9" stroke={active ? '#e8413c' : '#bcbcbc'} strokeWidth="1.5" />
  </svg>
);

const PersonGlyph = () => (
  <svg width="20" height="22" viewBox="0 0 20 22" fill="none" stroke="#ececec" strokeWidth="1.6">
    <circle cx="10" cy="4" r="2.6" />
    <path d="M1 6c3 2 5 3 9 3s6-1 9-3M7 9c0 5-1 8-4 12M13 9c-1 4 0 5 2 7M9 21l3-5M18 21l-3-5" />
  </svg>
);
const ViewNormal = () => (
  <svg width="22" height="20" viewBox="0 0 22 20" fill="none" stroke="#e4e4e4" strokeWidth="1.4">
    <rect x="1" y="1" width="20" height="18" />
    <path d="M1 7h20M1 13h20M8 1v18M15 1v18" />
  </svg>
);
const ViewPage = () => (
  <svg width="20" height="20" viewBox="0 0 20 20" fill="none" stroke="#e4e4e4" strokeWidth="1.4">
    <rect x="1" y="1" width="18" height="18" />
    <path d="M5 5h10v10H5zM5 8h10M5 12h10" />
  </svg>
);
const ViewBreak = () => (
  <svg width="22" height="20" viewBox="0 0 22 20" fill="none" stroke="#e4e4e4" strokeWidth="1.4">
    <path d="M1 9h20v10H1zM6 9V1h10v8M11 1v8" />
  </svg>
);

const MENU_GROUPS = [
  [
    { icon: 'left', text: '左对齐', key: 'L', hover: true },
    { icon: 'hcenter', text: '水平居中', key: 'C' },
    { icon: 'right', text: '右对齐', key: 'R' },
  ],
  [
    { icon: 'top', text: '顶端对齐', key: 'T' },
    { icon: 'vcenter', text: '垂直居中', key: 'M' },
    { icon: 'bottom', text: '底端对齐', key: 'B' },
  ],
  [
    { icon: 'distH', text: '横向分布', key: 'H' },
    { icon: 'distV', text: '纵向分布', key: 'V' },
  ],
  [
    { icon: 'snapGrid', text: '对齐网格', key: 'P' },
    { icon: 'snapShape', text: '对齐形状', key: 'S' },
    { icon: 'gridlines', text: '查看网格线', key: 'G', pressed: true },
  ],
];

const TOP_TABS = [
  { label: '文件', mr: 32 },
  { label: '开始' },
  { label: '插入' },
  { label: '页面布局' },
  { label: '公式' },
  { label: '数据' },
  { label: '审阅' },
  { label: '视图' },
  { label: '帮助' },
  { label: '百度网盘', mr: 28 },
];

const COLUMNS = 'ABCDEFGHIJKLMNOPQRSTU'.split('');
const ROWS = Array.from({ length: 32 }, (_, i) => i + 1);
const MONTHS = Array.from({ length: 12 }, (_, i) => i + 1);

const SELECTED_HANDLES = [
  [0, 0], [50, 0], [100, 0], [0, 50], [100, 50], [0, 100], [50, 100], [100, 100],
];

const RIGHT_SLICERS = [
  {
    title: '省份', x: 1919, y: 458, h: 246, clear: true,
    items: [['北京', 0], ['广东', 1], ['山东', 0], ['上海', 0], ['深圳', 0]],
  },
  {
    title: '产品', x: 1920, y: 713, h: 247, clear: true,
    items: [['产品1', 0], ['产品2', 1], ['产品3', 1], ['产品4', 1], ['产品5', 1]],
  },
  {
    title: '销售员', x: 1921, y: 968, h: 255, clear: false,
    items: [['丁香芳', 1], ['李邦', 1], ['唐德', 1], ['王宗洪', 1], ['赵德住', 1]],
  },
];

function SlicerHeader({ title, clear }) {
  return (
    <SlicerHead>
      {title}
      <HeadIcons>
        <MultiSelectGlyph />
        <ClearFilterGlyph active={clear} />
      </HeadIcons>
    </SlicerHead>
  );
}

function Spin({ w, h, value }) {
  return (
    <SpinInput $w={w} $h={h}>
      <span>{value}</span>
      <SpinArrows>
        <Caret up />
        <Caret />
      </SpinArrows>
    </SpinInput>
  );
}

export default function App() {
  return (
    <Page>
      <GlobalStyle />

      <TitleBar>
        <TitleLeft>
          <ExcelLogo />
          <Spaced $ml={23}>自动保存</Spaced>
          <Toggle>关</Toggle>
          <Spaced $ml={15}><SaveGlyph /></Spaced>
          <Spaced $ml={20}>
            <UndoGlyph />
            <Spaced $ml={6}><Caret color="#ececec" /></Spaced>
          </Spaced>
          <Spaced $ml={18}>
            <UndoGlyph color="#7a7a7a" />
            <Spaced $ml={6}><Caret color="#7a7a7a" /></Spaced>
          </Spaced>
          <Spaced $ml={20}><CustomizeGlyph /></Spaced>
          <Spaced $ml={37}>
            看板.xlsx
            <Spaced $ml={6}><Caret size={14} color="#ececec" /></Spaced>
          </Spaced>
        </TitleLeft>
        <SearchBox>
          <SearchGlyph />
          搜索
        </SearchBox>
        <TitleRight>
          LiMing Zhong
          <Spaced $ml={15}><Avatar /></Spaced>
          <Spaced $ml={46}><WinMin /></Spaced>
          <Spaced $ml={56}><WinRestore /></Spaced>
          <Spaced $ml={56}><WinClose /></Spaced>
        </TitleRight>
      </TitleBar>

      <TabRow>
        {TOP_TABS.map(t => (
          <RibbonTab key={t.label} $mr={t.mr}>{t.label}</RibbonTab>
        ))}
        <RibbonTab $active>切片器</RibbonTab>
        <TabActions>
          <CommentButton><CommentGlyph />批注</CommentButton>
          <ShareButton>
            <ShareGlyph />共享<Caret color="#222" />
          </ShareButton>
        </TabActions>
      </TabRow>

      <Ribbon>
        <Group $w={250}>
          <GroupBody>
            <CaptionColumn>
              <CaptionTitle>切片器题注:</CaptionTitle>
              <CaptionInput />
              <SettingsRow>
                <SettingsGlyph />
                切片器设置
              </SettingsRow>
            </CaptionColumn>
            <ReportButton>
              <ReportGlyph />
              报表
              <br />
              连接
            </ReportButton>
          </GroupBody>
          <GroupLabel>切片器</GroupLabel>
        </Group>

        <Group $w={638}>
          <GroupBody>
            <Gallery>
              {SWATCHES.map((s, i) => (
                <SwatchCell key={i} $selected={i === 0}>
                  <SlicerSwatch {...s} />
                </SwatchCell>
              ))}
              <GalleryScroll>
                <ScrollStep $off><Caret up size={12} /></ScrollStep>
                <ScrollStep $line><Caret size={12} /></ScrollStep>
                <ScrollStep $line><CustomizeGlyph color="#333" /></ScrollStep>
              </GalleryScroll>
            </Gallery>
          </GroupBody>
          <GroupLabel>切片器样式</GroupLabel>
        </Group>

        <Group $w={462}>
          <GroupBody>
            <ArrangeRow>
              <BigButton $w={81}>
                <LayerUp />
                <BigLabel>上移一层</BigLabel>
                <BigCaret><Caret /></BigCaret>
              </BigButton>
              <BigButton $w={81}>
                <LayerDown />
                <BigLabel>下移一层</BigLabel>
                <BigCaret><Caret /></BigCaret>
              </BigButton>
              <BigButton $w={82}>
                <LayerPane />
                <BigLabel>选择窗格</BigLabel>
              </BigButton>
              <BigButton $w={66} $open>
                <AlignGlyph kind="left" size={44} />
                <BigLabel>对齐</BigLabel>
                <BigCaret><Caret /></BigCaret>
              </BigButton>
              <BigButton $w={65}>
                <GroupGlyph />
                <BigLabel>组合</BigLabel>
                <BigCaret><Caret /></BigCaret>
              </BigButton>
              <BigButton $w={64} $off>
                <RotateGlyph />
                <BigLabel>旋转</BigLabel>
                <BigCaret $off><Caret /></BigCaret>
              </BigButton>
            </ArrangeRow>
          </GroupBody>
          <GroupLabel>排列</GroupLabel>
        </Group>

        <Group $w={222}>
          <GroupBody>
            <FieldStack $gap={4} $pad="0 11px 0 17px">
              <FieldRow>
                <FieldGlyph kind="columns" /><FieldText>列:</FieldText>
                <Spin w={98} h={35} value="1" />
              </FieldRow>
              <FieldRow>
                <FieldGlyph kind="height" /><FieldText>高度:</FieldText>
                <Spin w={119} h={35} value="0.58 厘米" />
              </FieldRow>
              <FieldRow>
                <FieldGlyph kind="width" /><FieldText>宽度:</FieldText>
                <Spin w={119} h={35} value="4.6 厘米" />
              </FieldRow>
            </FieldStack>
          </GroupBody>
          <GroupLabel>按钮</GroupLabel>
        </Group>

        <Group $w={222}>
          <GroupBody>
            <FieldStack $gap={12} $pad="11px 10px 0 17px">
              <FieldRow>
                <FieldGlyph kind="height" /><FieldText>高度:</FieldText>
                <Spin w={120} value="" />
              </FieldRow>
              <FieldRow>
                <FieldGlyph kind="width" /><FieldText>宽度:</FieldText>
                <Spin w={120} value="5.08 厘米" />
              </FieldRow>
            </FieldStack>
          </GroupBody>
          <GroupLabel $pr={26}>
            大小
            <Launcher width="12" height="12" viewBox="0 0 12 12" fill="none" stroke="#333" strokeWidth="1.3">
              <path d="M1 11V1h10M4 4l7 7M11 6v5H6" />
            </Launcher>
          </GroupLabel>
        </Group>

        <CollapseCaret><Caret size={16} /></CollapseCaret>
      </Ribbon>

      <FormulaBar>
        <FormulaBox $w={151}><Caret size={12} color="#d8d8d8" /></FormulaBox>
        <VDots $ml={13}><i /><i /><i /></VDots>
        <FormulaBox $w={109} $ml={14} $justify="flex-start">
          <svg width="62" height="20" viewBox="0 0 62 20" fill="none" stroke="#9a9a9a" strokeWidth="1.5">
            <path d="M1 1l18 18M19 1L1 19M37 11l6 7 12-16" />
          </svg>
          <FxText>fx</FxText>
        </FormulaBox>
        <FormulaBox $ml={7}><Caret size={14} color="#d8d8d8" /></FormulaBox>
      </FormulaBar>

      <GridArea>
        <ColumnHeaders>
          <Corner />
          {COLUMNS.map(c => <ColumnCell key={c}>{c}</ColumnCell>)}
        </ColumnHeaders>
        <GridBody>
          <RowHeaders>
            {ROWS.map(r => <RowCell key={r}>{r}</RowCell>)}
          </RowHeaders>
          <Sheet>
            <Banner>销售仪表板</Banner>

            <SlicerBox $x={45} $y={458} $w={287} $h={201}>
              <SlicerHeader title="年份" />
              <SlicerBody>
                <ItemList $w={228} $h={146}>
                  {[2019, 2020, 2021, 2022].map(y => (
                    <SlicerItem key={y} $on $digits>{y}</SlicerItem>
                  ))}
                </ItemList>
                <SlicerScroll />
              </SlicerBody>
            </SlicerBox>

            <SlicerBox $x={44} $y={668} $w={288} $h={553}>
              <SlicerHeader title="月份" />
              <SlicerBody>
                <ItemList>
                  {MONTHS.map(m => <SlicerItem key={m} $on $digits>{m}</SlicerItem>)}
                </ItemList>
              </SlicerBody>
            </SlicerBox>

            {RIGHT_SLICERS.map(s => (
              <SlicerBox key={s.title} $x={s.x} $y={s.y} $w={288} $h={s.h} $selected>
                <SlicerHeader title={s.title} clear={s.clear} />
                <SlicerBody>
                  <ItemList>
                    {s.items.map(([label, on]) => (
                      <SlicerItem key={label} $on={!!on}>{label}</SlicerItem>
                    ))}
                  </ItemList>
                </SlicerBody>
                {SELECTED_HANDLES.map(([hx, hy]) => (
                  <Handle key={`${hx}-${hy}`} $x={hx} $y={hy} />
                ))}
              </SlicerBox>
            ))}
          </Sheet>
        </GridBody>
        <VScroll><VThumb /></VScroll>
      </GridArea>

      <TabsBar>
        <TabsLeft>
          <NavArrows>
            <svg width="12" height="18" viewBox="0 0 12 18" fill="none" stroke="#8f8f8f" strokeWidth="1.5"><path d="M10 1L2 9l8 8" /></svg>
            <svg width="12" height="18" viewBox="0 0 12 18" fill="none" stroke="#8f8f8f" strokeWidth="1.5"><path d="M2 1l8 8-8 8" /></svg>
          </NavArrows>
          <SheetTab $pad={19}>透视图</SheetTab>
          <SheetTab $pad={18}>数据</SheetTab>
        </TabsLeft>
        <ActiveTab>看板</ActiveTab>
        <TabsRight>
          <TabDivider />
          <PlusSign>+</PlusSign>
          <VDots $ml={850}><i /><i /><i /></VDots>
          <HScroll><HThumb /></HScroll>
        </TabsRight>
      </TabsBar>

      <StatusBar>
        就绪
        <StatusBold><PersonGlyph />辅助功能: 调查</StatusBold>
        <StatusRight>
          <ViewGlyphs>
            <ViewNormal />
            <ViewPage />
            <ViewBreak />
          </ViewGlyphs>
          −
          <ZoomSlider />
          +
          <ZoomValue>100%</ZoomValue>
        </StatusRight>
      </StatusBar>

      <Menu>
        <MenuList>
          {MENU_GROUPS.map((items, g) => (
            <React.Fragment key={g}>
              {g > 0 && <MenuSep />}
              {items.map(it => (
                <MenuItem key={it.key} $hover={it.hover} $pressed={it.pressed}>
                  <AlignGlyph kind={it.icon} size={it.pressed ? 30 : 26} />
                  <span>{it.text}(<AccessKey>{it.key}</AccessKey>)</span>
                </MenuItem>
              ))}
            </React.Fragment>
          ))}
        </MenuList>
      </Menu>

      <Callout $x={774} $y={73} $w={108} $h={46} />
      <Callout $x={1153} $y={175} $w={72} $h={40} />
      <Callout $x={1157} $y={322} $w={157} $h={49} />
      <Callout $x={1887} $y={438} $w={338} $h={811} />

      <Watermark>CSDN @小钟不想敲代码</Watermark>
    </Page>
  );
}
